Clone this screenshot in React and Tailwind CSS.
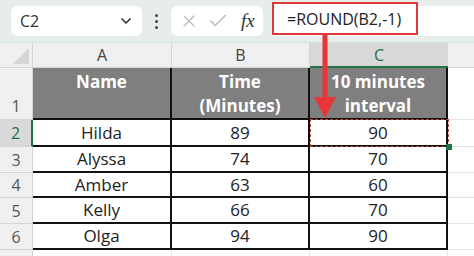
import { ChevronDown, X, Check } from 'lucide-react'

const rows = [
  ['Hilda', 89, 90],
  ['Alyssa', 74, 70],
  ['Amber', 63, 60],
  ['Kelly', 66, 70],
  ['Olga', 94, 90],
]

const rowH = ['h-[27px]', 'h-[26px]', 'h-[25px]', 'h-[26px]', 'h-[26px]']

export default function App() {
  return (
    <div className="relative w-[474px] h-[256px] overflow-hidden bg-white font-['Open_Sans',sans-serif]">
      {/* formula bar */}
      <div className="flex items-center h-[43px] bg-[#e7eee9] border-b border-[#d9dfda]">
        <div className="ml-[11px] w-[131px] h-[30px] bg-white rounded-md flex items-center justify-between pl-[9px] pr-[8px] text-[16px] text-[#333]">
          <span>C2</span>
          <ChevronDown size={16} strokeWidth={2.5} className="text-[#333]" />
        </div>
        <div className="w-[29px] flex flex-col items-center gap-[3px]">
          <span className="w-[3px] h-[3px] rounded-full bg-[#444]" />
          <span className="w-[3px] h-[3px] rounded-full bg-[#444]" />
          <span className="w-[3px] h-[3px] rounded-full bg-[#444]" />
        </div>
        <div className="w-[92px] h-[30px] bg-white rounded-md flex items-center pl-[8px] gap-[8px] text-[#bbb]">
          <X size={20} strokeWidth={1.5} />
          <Check size={22} strokeWidth={1.5} />
          <span className="ml-[4px] text-[#333] text-[19px] italic font-['Liberation_Serif',serif]">fx</span>
        </div>
        <div className="ml-[10px] flex-1 h-[30px] bg-white" />
      </div>

      {/* formula box overlay */}
      <div className="absolute left-[272px] top-[2px] w-[146px] h-[33px] border-2 border-[#e2383b] bg-white flex items-center pl-[13px] text-[16px] text-[#222]">
        =ROUND(B2,-1)
      </div>

      {/* grid */}
      <div className="grid grid-cols-[33px_139px_138px_138px_1fr]">
        {/* column headers */}
        <div className="h-[25px] bg-[#f0f0f0] border-r border-b border-[#d4d4d4] relative">
          <div className="absolute right-[3px] bottom-[3px] w-0 h-0 border-l-[16px] border-l-transparent border-b-[16px] border-b-[#d6d6d6]" />
        </div>
        <div className="h-[25px] bg-[#f0f0f0] border-r border-b border-[#d4d4d4] flex items-center justify-center text-[16px] text-[#444]">A</div>
        <div className="h-[25px] bg-[#f0f0f0] border-r border-b border-[#d4d4d4] flex items-center justify-center text-[16px] text-[#444]">B</div>
        <div className="h-[25px] bg-[#d9d9d9] border-b-2 border-[#217346] flex items-center justify-center text-[16px] text-[#217346]">C</div>
        <div className="h-[25px] bg-[#f0f0f0] border-b border-[#d4d4d4]" />

        {/* row 1 */}
        <div className="h-[52px] bg-[#f0f0f0] border-r border-b border-[#d4d4d4] flex items-end justify-center pb-[1px] text-[16px] text-[#555]">1</div>
        <div className="h-[52px] bg-[#7f7f7f] border-r-2 border-b-2 border-[#111] flex justify-center pt-[2px] text-[17px] leading-[24px] font-bold text-white">Name</div>
        <div className="h-[52px] bg-[#7f7f7f] border-r-2 border-b-2 border-[#111] flex flex-col items-center pt-[2px] text-[17px] leading-[24px] font-bold text-white">
          <span>Time</span>
          <span>(Minutes)</span>
        </div>
        <div className="h-[52px] bg-[#7f7f7f] border-r-2 border-b-2 border-[#111] flex flex-col items-center pt-[2px] text-[17px] leading-[24px] font-bold text-white">
          <span>10 minutes</span>
          <span>interval</span>
        </div>
        <div className="h-[52px] border-b border-[#e4e4e4]" />

        {rows.map(([name, time, interval], i) => (
          <Row key={name} n={i + 2} h={rowH[i]} name={name} time={time} interval={interval} selected={i === 0} />
        ))}

        <div className="h-[20px] bg-[#f0f0f0] border-r border-[#d4d4d4]" />
        <div className="h-[20px] border-r border-[#e4e4e4]" />
        <div className="h-[20px] border-r border-[#e4e4e4]" />
        <div className="h-[20px] border-r border-[#e4e4e4]" />
        <div className="h-[20px]" />
      </div>

      {/* selection marquee on C2 */}
      <div className="absolute left-[310px] top-[119px] w-[139px] h-[28px] border-[1.5px] border-dashed border-[#b94c40]">
        <div className="absolute -right-[4px] -bottom-[4px] w-[6px] h-[6px] bg-[#217346]" />
      </div>

      {/* red arrow */}
      <svg className="absolute left-[312px] top-[35px]" width="26" height="86" viewBox="0 0 26 86">
        <rect x="10.5" y="0" width="5" height="64" fill="#e8353a" />
        <polygon points="2,62 24,62 13,83" fill="#e8353a" />
      </svg>
    </div>
  )
}

function Row({ n, h, name, time, interval, selected }) {
  return (
    <>
      <div className={`${h} ${selected ? 'bg-[#d9d9d9] text-[#217346] border-r-2 border-r-[#217346]' : 'bg-[#f0f0f0] text-[#555] border-r border-r-[#d4d4d4]'} border-b border-b-[#d4d4d4] flex items-center justify-center text-[16px]`}>{n}</div>
      <div className={`${h} border-r-2 border-b-2 border-[#111] flex items-center justify-center text-[17px] text-[#222]`}>{name}</div>
      <div className={`${h} border-r-2 border-b-2 border-[#111] flex items-center justify-center text-[17px] text-[#222]`}>{time}</div>
      <div className={`${h} border-r-2 border-b-2 border-[#111] flex items-center justify-center text-[17px] text-[#222]`}>{interval}</div>
      <div className={`${h} border-b border-[#e4e4e4]`} />
    </>
  )
}
